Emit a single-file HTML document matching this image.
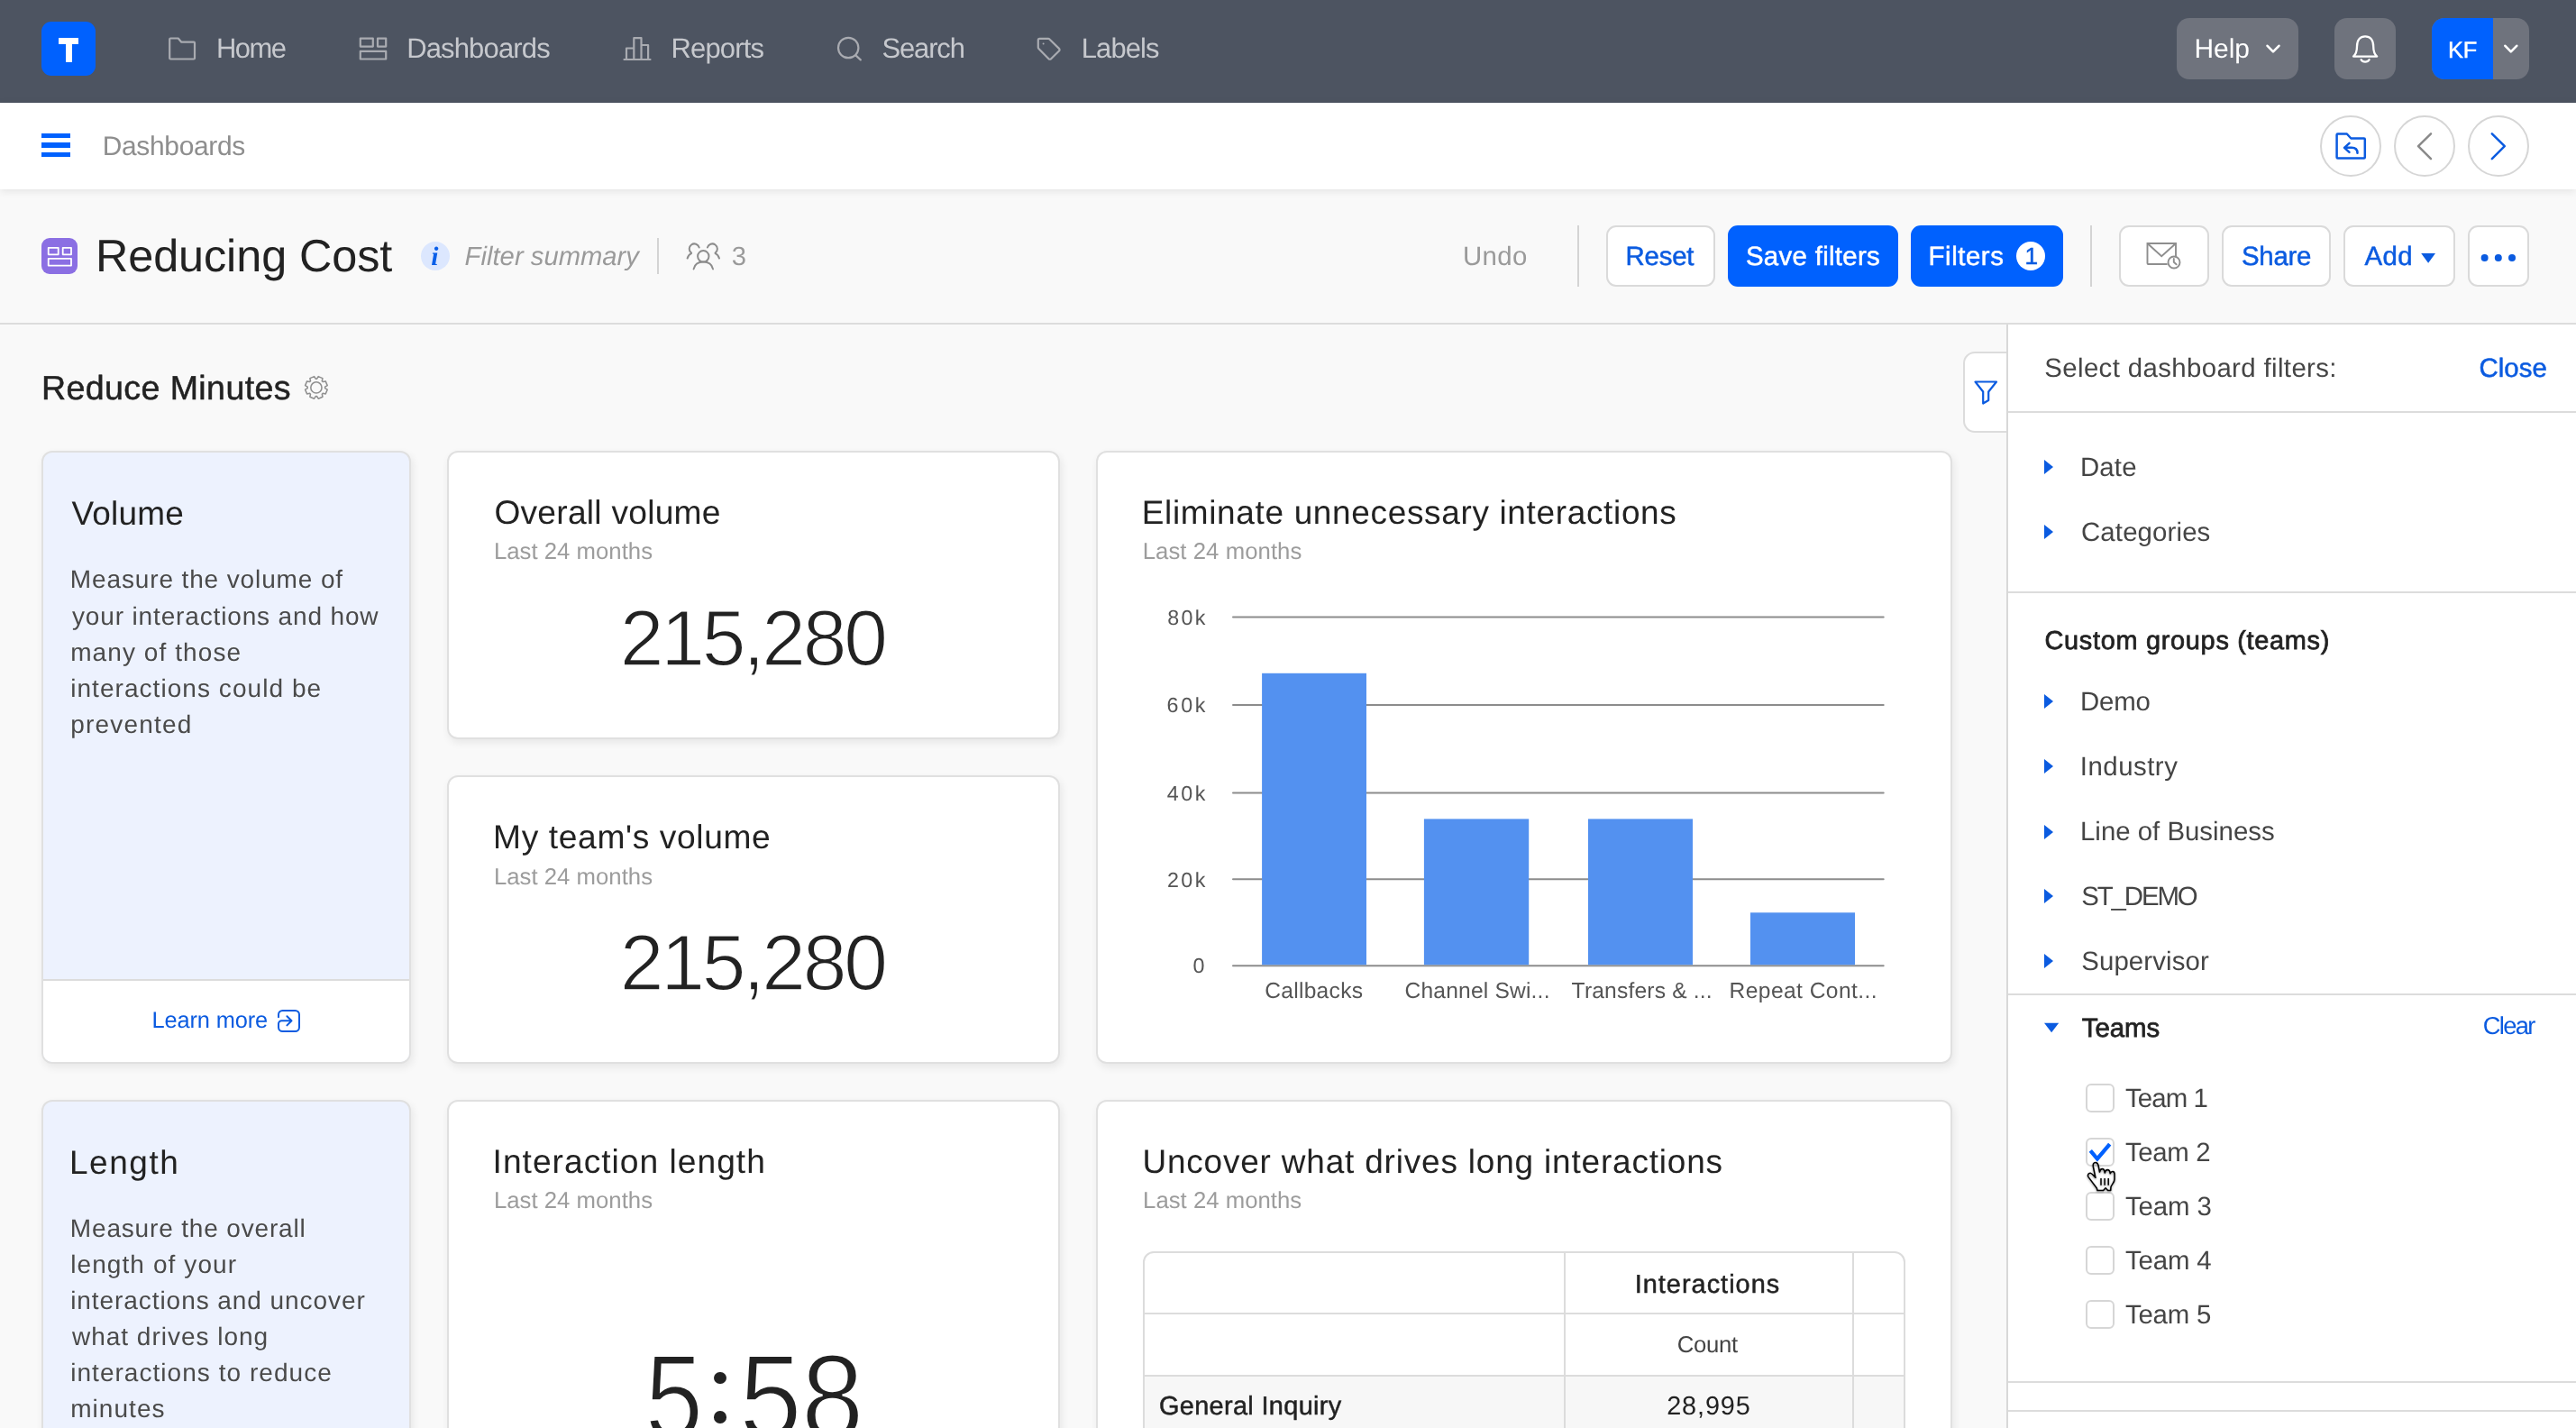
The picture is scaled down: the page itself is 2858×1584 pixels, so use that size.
<!DOCTYPE html>
<html lang="en">
<head>
<meta charset="utf-8">
<title>Reducing Cost</title>
<style>
*{box-sizing:border-box;margin:0;padding:0}
html,body{width:2858px;height:1584px;overflow:hidden;background:#f9f9f9}
body{font-family:"Liberation Sans",sans-serif;color:#222;position:relative;text-rendering:geometricPrecision}
#w{position:absolute;left:0;top:0;width:2858px;height:1584px;will-change:transform}
.a{position:absolute}
.t{position:absolute;white-space:nowrap;line-height:1}
svg{position:absolute;left:0;top:0;overflow:visible;fill:none;stroke-linecap:round;stroke-linejoin:round}
#nav{left:0;top:0;width:2858px;height:114px;background:#4d5461}
#logo{left:46px;top:24px;width:60px;height:60px;border-radius:11px;background:#0061fe}
.nb{background:#6f737d;border-radius:14px;top:20px;height:68px}
#crumb{left:0;top:114px;width:2858px;height:96px;background:#fff;box-shadow:0 2px 9px rgba(0,0,0,.09)}
.circ{width:68px;height:68px;border-radius:50%;border:2px solid #d6d6d6;background:#fff;top:128px}
#tbar{left:0;top:358px;width:2858px;height:2px;background:#dcdcdc}
.btn{top:250px;height:68px;border-radius:11px;border:2px solid #dadada;background:#fff}
.btn.p{background:#0061fe;border-color:#0061fe}
.card{background:#fff;border:2px solid #e0e0e0;border-radius:12px;box-shadow:2px 4px 10px rgba(0,0,0,.075)}
.info{background:#edf2fe}
#panel{left:2226px;top:360px;width:632px;height:1224px;background:#fff;border-left:2px solid #d8d8d8}
.hr{left:2228px;width:630px;height:2px;background:#dcdcdc}
.tri{left:2268px;width:0;height:0;border-left:10px solid #0b5be0;border-top:8px solid transparent;border-bottom:8px solid transparent}
.cb{left:2314px;width:32px;height:32px;border:2px solid #d6d6d6;border-radius:6px;background:#fff}
</style>
</head>
<body>
<div id="w">
<div id="nav" class="a"></div><div id="logo" class="a"></div>
<div class="a" style="left:65px;top:41.5px;width:22px;height:7px;background:#fff"></div><div class="a" style="left:72.5px;top:41.5px;width:7px;height:27px;background:#fff"></div>
<div class="t" style="left:239.9px;top:38px;color:#c6c8cd;font-size:30.98px;letter-spacing:-1.47px;">Home</div>
<div class="t" style="left:451.2px;top:38px;color:#c6c8cd;font-size:30.98px;letter-spacing:-0.84px;">Dashboards</div>
<div class="t" style="left:744.6px;top:38px;color:#c6c8cd;font-size:30.98px;letter-spacing:-0.85px;">Reports</div>
<div class="t" style="left:978.5px;top:38px;color:#c6c8cd;font-size:30.98px;letter-spacing:-1.15px;">Search</div>
<div class="t" style="left:1199.8px;top:38px;color:#c6c8cd;font-size:30.98px;letter-spacing:-0.91px;">Labels</div>
<svg width="2858" height="114" stroke="#a9abb1" stroke-width="2.2">
<path d="M188.2 43.5 a1 1 0 0 1 1-1 h8.5 l3.6 4.2 h13.7 a1 1 0 0 1 1 1 v16.8 a1 1 0 0 1-1 1 h-25.8 a1 1 0 0 1-1-1 z"/>
<rect x="399.8" y="42.6" width="14" height="9"/><rect x="419" y="42.6" width="9.2" height="9"/><rect x="399.8" y="56.8" width="28.4" height="8.7"/>
<path d="M692.5 66 h29 M695 65.5 v-12 h8.3 M703.3 65.5 v-23.3 h8.2 v23.3 M711.5 50 h7.6 v15.5"/>
<circle cx="941.2" cy="53" r="11.2"/><path d="M949.4 61.4 l5.4 5"/>
<path d="M1151.8 44.5 a1.6 1.6 0 0 1 1.6-1.6 h9.6 a2 2 0 0 1 1.4 .6 l10.6 10.4 a1.8 1.8 0 0 1 0 2.6 l-8.9 8.7 a1.8 1.8 0 0 1-2.6 0 l-11.1-11.3 a2 2 0 0 1-.6-1.4 z"/>
<circle cx="1157.6" cy="48.6" r="1" fill="#a9abb1" stroke="none"/>
</svg>
<div class="a nb" style="left:2415px;width:135px"></div>
<div class="t" style="left:2434.6px;top:40px;color:#fff;font-size:29.93px;letter-spacing:-0.10px;">Help</div>
<div class="a nb" style="left:2590px;width:68px"></div>
<div class="a nb" style="left:2698px;width:108px"></div>
<div class="a" style="left:2698px;top:20px;width:68px;height:68px;background:#0061fe;border-radius:14px 0 0 14px"></div>
<div class="t" style="left:2716.1px;top:44px;color:#fff;font-size:25.41px;letter-spacing:-0.20px;-webkit-text-stroke:.4px #fff;">KF</div>
<svg width="2858" height="114" stroke="#fff" stroke-width="2.6">
<path d="M2515.6 50.8 l6.4 6.6 l6.4 -6.6"/>
<path d="M2779.4 50.8 l6.4 6.6 l6.4 -6.6"/>
<path stroke-width="2.3" d="M2611 62.6 c3.2-2.6 4-6.6 4-11 c0-7.2 3.6-11.2 9.1-11.2 c5.500 0 9.100 4 9.100 11.200 c0 4.400 .8 8.400 4 11 z"/>
<path stroke-width="2.3" d="M2619.600 66.200 c.8 1.500 2.300 2.400 4.500 2.400 s3.700 -.9 4.500 -2.400"/>
</svg>
<div id="crumb" class="a"></div>
<div class="a" style="left:45.5px;top:147.5px;width:32.5px;height:5.5px;background:#0061fe"></div>
<div class="a" style="left:45.5px;top:158px;width:32.5px;height:5.5px;background:#0061fe"></div>
<div class="a" style="left:45.5px;top:168.5px;width:32.5px;height:5.5px;background:#0061fe"></div>
<div class="t" style="left:113.7px;top:148px;color:#8e8e8e;font-size:29.93px;letter-spacing:-0.30px;">Dashboards</div>
<div class="a circ" style="left:2574px"></div><div class="a circ" style="left:2656px"></div><div class="a circ" style="left:2738px"></div>
<svg width="2858" height="220" stroke="#0b5be0" stroke-width="2.5">
<path d="M2592.600 149.500 a1 1 0 0 1 1-1 h10.200 l4.600 5 h14.400 a1 1 0 0 1 1 1 v20 a1 1 0 0 1 -1 1 h-29.200 a1 1 0 0 1 -1 -1 z"/>
<path d="M2606.500 158.800 l-5.500 5 l5.500 5 M2601.500 163.800 h7.500 c4.500 0 6.500 2.500 6.500 6"/>
<path stroke="#8a8a8a" d="M2697 148.300 l-14 13.900 l14 13.900"/>
<path d="M2764.800 148.300 l14 13.900 l-14 13.900"/>
</svg>
<div id="tbar" class="a"></div>
<div class="a" style="left:46px;top:264px;width:40px;height:40px;border-radius:9px;background:#8b6fe3"></div>
<svg width="900" height="360" stroke="#fff" stroke-width="1.8" stroke-linejoin="miter">
<rect x="53.700" y="274.800" width="11" height="7.500"/><rect x="69.700" y="274.800" width="9.300" height="7.500"/><rect x="53.700" y="286.800" width="25.300" height="7.800"/></svg>
<div class="t" style="left:105.9px;top:259px;color:#222;font-size:50.4px;letter-spacing:-0.09px;">Reducing Cost</div>
<div class="a" style="left:467px;top:267.800px;width:32px;height:32px;border-radius:50%;background:#dce7fe"></div>
<div class="t" style="left:478.3px;top:271px;color:#0b5fe8;font-size:29.5px;font-weight:bold;font-style:italic;font-family:'Liberation Serif',serif;">i</div>
<div class="t" style="left:515.6px;top:271px;color:#9a9a9a;font-size:29.19px;font-style:italic;letter-spacing:0.03px;">Filter summary</div>
<div class="a" style="left:729px;top:264px;width:2px;height:40px;background:#d4d4d4"></div>
<svg width="900" height="360" stroke="#8c8c8c" stroke-width="2">
<circle cx="780.3" cy="284.3" r="6.2"/><path d="M769.6 298.4 c1.2-5.6 5.4-7.8 10.700-7.8 s9.500 2.200 10.700 7.800"/>
<path d="M767.1 280.600 A5.600 5.600 0 1 1 775.700 274.500 M762.600 286.600 c.8-2.600 2.200-4.400 4.400-5.400"/>
<path d="M793.500 280.600 A5.600 5.600 0 1 0 784.900 274.500 M798 286.600 c-.8-2.600-2.200-4.400-4.400-5.400"/>
</svg>
<div class="t" style="left:811.7px;top:271px;color:#9a9a9a;font-size:29.19px;">3</div>
<div class="t" style="left:1623.0px;top:270px;color:#9a9a9a;font-size:29.4px;letter-spacing:0.37px;">Undo</div>
<div class="a" style="left:1750px;top:250px;width:2px;height:68px;background:#d4d4d4"></div>
<div class="a btn" style="left:1782px;width:121px"></div>
<div class="t" style="left:1803.6px;top:270px;color:#0b5be0;font-size:29.4px;letter-spacing:-0.21px;-webkit-text-stroke:.5px #0b5be0;">Reset</div>
<div class="a btn p" style="left:1917px;width:189px"></div>
<div class="t" style="left:1936.9px;top:270px;color:#fff;font-size:29.4px;letter-spacing:0.32px;-webkit-text-stroke:.5px #fff;">Save filters</div>
<div class="a btn p" style="left:2120px;width:169px"></div>
<div class="t" style="left:2139.6px;top:270px;color:#fff;font-size:29.4px;letter-spacing:0.55px;-webkit-text-stroke:.5px #fff;">Filters</div>
<div class="a" style="left:2237px;top:268px;width:32px;height:32px;border-radius:50%;background:#fff"></div>
<div class="t" style="left:2246.6px;top:271px;color:#0b5be0;font-size:26.25px;-webkit-text-stroke:.5px #0b5be0;">1</div>
<div class="a" style="left:2319px;top:250px;width:2px;height:68px;background:#d4d4d4"></div>
<div class="a btn" style="left:2351px;width:100px"></div>
<svg width="2858" height="360" stroke="#8e8e8e" stroke-width="1.9" style="stroke-linejoin:miter;stroke-linecap:butt">
<path d="M2404.600 293 H2383.400 a.9 .9 0 0 1 -.9 -.9 V270 H2414 V284.400"/><path d="M2382.500 270 L2398.200 284.100 L2414 270"/>
<circle cx="2412" cy="291" r="6.500" fill="#fff"/><path style="stroke-linecap:round;stroke-linejoin:round" d="M2411.800 287 V290.800 L2414.600 293.300"/></svg>
<div class="a btn" style="left:2465px;width:121px"></div>
<div class="t" style="left:2487.0px;top:270px;color:#0b5be0;font-size:29.4px;letter-spacing:-0.27px;-webkit-text-stroke:.5px #0b5be0;">Share</div>
<div class="a btn" style="left:2600px;width:124px"></div>
<div class="t" style="left:2623.5px;top:270px;color:#0b5be0;font-size:29.4px;letter-spacing:0.35px;-webkit-text-stroke:.5px #0b5be0;">Add</div>
<svg width="2858" height="360"><path fill="#0b5be0" d="M2686.200 281 h15.800 l-7.900 10.800 z"/></svg>
<div class="a btn" style="left:2738px;width:68px"></div>
<svg width="2858" height="360" fill="#0b5be0"><circle cx="2756.600" cy="285.900" r="4" fill="#0b5be0"/><circle cx="2771.800" cy="285.900" r="4" fill="#0b5be0"/><circle cx="2787" cy="285.900" r="4" fill="#0b5be0"/></svg>
<div class="t" style="left:45.9px;top:412px;color:#222;font-size:37.59px;letter-spacing:0.40px;-webkit-text-stroke:.5px #222;">Reduce Minutes</div>
<svg width="500" height="500" stroke="#8f8f8f" stroke-width="1.55"><path d="M360.6 430.6 L363.2 432.2 L361.2 436.9 L358.2 436.3 L357.3 437.2 L357.9 440.2 L353.2 442.2 L351.6 439.6 L350.2 439.6 L348.6 442.2 L343.9 440.2 L344.5 437.2 L343.6 436.3 L340.6 436.9 L338.6 432.2 L341.2 430.6 L341.2 429.2 L338.6 427.6 L340.6 422.9 L343.6 423.5 L344.5 422.6 L343.9 419.6 L348.6 417.6 L350.2 420.2 L351.6 420.2 L353.2 417.6 L357.9 419.6 L357.3 422.6 L358.2 423.5 L361.2 422.9 L363.2 427.6 L360.6 429.2Z"/><circle cx="350.9" cy="429.9" r="6.1"/></svg>
<div class="a card info" style="left:46px;top:500px;width:410px;height:680px"></div>
<div class="a" style="left:48px;top:1086px;width:406px;height:92px;background:#fff;border-top:2px solid #dcdcdc;border-radius:0 0 10px 10px"></div>
<div class="a card" style="left:496px;top:500px;width:680px;height:320px"></div>
<div class="a card" style="left:496px;top:860px;width:680px;height:320px"></div>
<div class="a card" style="left:1216px;top:500px;width:950px;height:680px"></div>
<div class="a card info" style="left:46px;top:1220px;width:410px;height:400px"></div>
<div class="a card" style="left:496px;top:1220px;width:680px;height:400px"></div>
<div class="a card" style="left:1216px;top:1220px;width:950px;height:400px"></div>
<div class="t" style="left:79.5px;top:552px;color:#222;font-size:36.96px;letter-spacing:0.22px;">Volume</div>
<div class="t" style="left:77.8px;top:629px;color:#4a4a4a;font-size:28.04px;letter-spacing:0.86px;">Measure the volume of</div>
<div class="t" style="left:80.0px;top:670px;color:#4a4a4a;font-size:28.04px;letter-spacing:0.84px;">your interactions and how</div>
<div class="t" style="left:78.2px;top:710px;color:#4a4a4a;font-size:28.04px;letter-spacing:1.07px;">many of those</div>
<div class="t" style="left:78.2px;top:750px;color:#4a4a4a;font-size:28.04px;letter-spacing:1.04px;">interactions could be</div>
<div class="t" style="left:78.2px;top:790px;color:#4a4a4a;font-size:28.04px;letter-spacing:1.18px;">prevented</div>
<div class="t" style="left:168.6px;top:1120px;color:#0b5be0;font-size:25.41px;letter-spacing:-0.15px;">Learn more</div>
<svg width="500" height="1300" stroke="#0b5be0" stroke-width="2"><path d="M309 1128.300 V1125.500 a4.500 4.500 0 0 1 4.500-4.500 H327.500 a4.500 4.500 0 0 1 4.500 4.500 V1139.500 a4.500 4.500 0 0 1 -4.500 4.500 H313.500 a4.500 4.500 0 0 1 -4.500-4.500 V1135.700 a3.500 3.500 0 0 1 3.500-3.500 H323.300 M318.400 1127.200 l5.100 5 l-5.100 5.200"/></svg>
<div class="t" style="left:548.4px;top:550px;color:#222;font-size:37.17px;letter-spacing:0.25px;">Overall volume</div>
<div class="t" style="left:547.9px;top:600px;color:#9c9c9c;font-size:25.73px;letter-spacing:0.02px;">Last 24 months</div>
<div class="t" style="left:687.8px;top:665px;color:#222;font-size:87.67px;letter-spacing:-3.29px;-webkit-text-stroke:1.6px #fff;">215,280</div>
<div class="t" style="left:547.1px;top:910px;color:#222;font-size:37.17px;letter-spacing:0.63px;">My team&#x27;s volume</div>
<div class="t" style="left:547.9px;top:961px;color:#9c9c9c;font-size:25.73px;letter-spacing:0.02px;">Last 24 months</div>
<div class="t" style="left:687.8px;top:1025px;color:#222;font-size:87.67px;letter-spacing:-3.29px;-webkit-text-stroke:1.6px #fff;">215,280</div>
<div class="t" style="left:77.0px;top:1272px;color:#222;font-size:36.96px;letter-spacing:1.57px;">Length</div>
<div class="t" style="left:77.8px;top:1349px;color:#4a4a4a;font-size:28.04px;letter-spacing:0.82px;">Measure the overall</div>
<div class="t" style="left:78.2px;top:1389px;color:#4a4a4a;font-size:28.04px;letter-spacing:1.08px;">length of your</div>
<div class="t" style="left:78.2px;top:1429px;color:#4a4a4a;font-size:28.04px;letter-spacing:0.92px;">interactions and uncover</div>
<div class="t" style="left:80.0px;top:1469px;color:#4a4a4a;font-size:28.04px;letter-spacing:0.97px;">what drives long</div>
<div class="t" style="left:78.2px;top:1509px;color:#4a4a4a;font-size:28.04px;letter-spacing:1.03px;">interactions to reduce</div>
<div class="t" style="left:78.2px;top:1549px;color:#4a4a4a;font-size:28.04px;letter-spacing:1.03px;">minutes</div>
<div class="t" style="left:546.6px;top:1270px;color:#222;font-size:37.17px;letter-spacing:1.01px;">Interaction length</div>
<div class="t" style="left:547.9px;top:1320px;color:#9c9c9c;font-size:25.73px;letter-spacing:0.02px;">Last 24 months</div>
<div class="t" style="left:715.2px;top:1484px;color:#222;font-size:134.19px;transform-origin:5.2px 0;transform:scaleX(0.8612);-webkit-text-stroke:2.4px #fff;">5</div>
<div class="t" style="left:819.6px;top:1484px;color:#222;font-size:134.19px;letter-spacing:-0.94px;transform-origin:5.2px 0;transform:scaleX(0.9300);-webkit-text-stroke:2.4px #fff;">58</div>
<div class="a" style="left:792.4px;top:1521.5px;width:13.6px;height:13.6px;border-radius:50%;background:#222"></div><div class="a" style="left:792.4px;top:1565.2px;width:13.6px;height:13.6px;border-radius:50%;background:#222"></div>
<div class="t" style="left:1266.7px;top:551px;color:#222;font-size:36.96px;letter-spacing:0.67px;">Eliminate unnecessary interactions</div>
<div class="t" style="left:1267.7px;top:600px;color:#9c9c9c;font-size:25.73px;letter-spacing:0.06px;">Last 24 months</div>
<svg width="2858" height="1584" stroke-linecap="butt"><path stroke="#8c8c8c" stroke-width="2" d="M1368 684.6 H2089.700"/><path stroke="#8c8c8c" stroke-width="2" d="M1368 782 H2089.700"/><path stroke="#8c8c8c" stroke-width="2" d="M1368 879.5 H2089.700"/><path stroke="#8c8c8c" stroke-width="2" d="M1368 975.3 H2089.700"/><path stroke="#8c8c8c" stroke-width="2" d="M1368 1071.2 H2089.700"/><rect x="1400.1" y="746.8" width="115.9" height="323.4" fill="#5391f0"/><rect x="1579.9" y="908.4" width="116.3" height="161.8" fill="#5391f0"/><rect x="1762" y="908.4" width="116.0" height="161.8" fill="#5391f0"/><rect x="1942" y="1012.3" width="116.0" height="57.9" fill="#5391f0"/></svg>
<div class="t" style="left:1295.3px;top:674px;color:#555;font-size:23.31px;letter-spacing:2.25px;">80k</div>
<div class="t" style="left:1294.5px;top:771px;color:#555;font-size:23.31px;letter-spacing:2.67px;">60k</div>
<div class="t" style="left:1294.8px;top:869px;color:#555;font-size:23.31px;letter-spacing:2.50px;">40k</div>
<div class="t" style="left:1295.0px;top:965px;color:#555;font-size:23.31px;letter-spacing:2.38px;">20k</div>
<div class="t" style="left:1323.5px;top:1060px;color:#555;font-size:23.31px;">0</div>
<div class="t" style="left:1403.2px;top:1088px;color:#555;font-size:24.57px;letter-spacing:0.29px;">Callbacks</div>
<div class="t" style="left:1558.5px;top:1088px;color:#555;font-size:24.57px;letter-spacing:0.20px;">Channel Swi...</div>
<div class="t" style="left:1743.6px;top:1088px;color:#555;font-size:24.57px;letter-spacing:0.19px;">Transfers &amp; ...</div>
<div class="t" style="left:1918.6px;top:1088px;color:#555;font-size:24.57px;letter-spacing:0.43px;">Repeat Cont...</div>
<div class="t" style="left:1267.4px;top:1271px;color:#222;font-size:36.96px;letter-spacing:0.82px;">Uncover what drives long interactions</div>
<div class="t" style="left:1268.1px;top:1320px;color:#9c9c9c;font-size:25.73px;letter-spacing:0.02px;">Last 24 months</div>
<div class="a" style="left:1268px;top:1387.5px;width:846px;height:260px;border:2px solid #dcdcdc;border-radius:12px;background:#fff;overflow:hidden"><div class="a" style="left:0;top:135px;width:846px;height:130px;background:#f7f7f7"></div><div class="a" style="left:0;top:66px;width:846px;height:2px;background:#dcdcdc"></div><div class="a" style="left:0;top:135px;width:846px;height:2px;background:#dcdcdc"></div><div class="a" style="left:465px;top:0;width:2px;height:260px;background:#dcdcdc"></div><div class="a" style="left:784.500px;top:0;width:2px;height:260px;background:#dcdcdc"></div></div>
<div class="t" style="left:1813.7px;top:1411px;color:#222;font-size:28.88px;letter-spacing:1.02px;-webkit-text-stroke:.5px #222;">Interactions</div>
<div class="t" style="left:1860.8px;top:1480px;color:#454545;font-size:25.73px;letter-spacing:-0.34px;">Count</div>
<div class="t" style="left:1286.0px;top:1546px;color:#222;font-size:28.88px;letter-spacing:0.34px;-webkit-text-stroke:.5px #222;">General Inquiry</div>
<div class="t" style="left:1849.2px;top:1546px;color:#222;font-size:28.88px;letter-spacing:0.87px;">28,995</div>
<div class="a" style="left:2178px;top:390px;width:52px;height:90px;background:#fff;border:2px solid #dcdcdc;border-radius:13px 0 0 13px"></div>
<div id="panel" class="a"></div>
<svg width="2858" height="600" stroke="#0b5be0" stroke-width="2.200"><path d="M2191.500 423.500 h23.500 l-8.800 11 v9.500 l-6 3.500 v-13 z"/></svg>
<div class="t" style="left:2268.3px;top:394px;color:#454545;font-size:29.4px;letter-spacing:0.37px;">Select dashboard filters:</div>
<div class="t" style="left:2750.4px;top:394px;color:#0b5be0;font-size:29.4px;letter-spacing:0.08px;-webkit-text-stroke:.5px #0b5be0;">Close</div>
<div class="a hr" style="top:456px"></div><div class="a hr" style="top:656px"></div><div class="a hr" style="top:1102px"></div><div class="a hr" style="top:1532px"></div><div class="a hr" style="top:1564px"></div>
<div class="t" style="left:2308.0px;top:504px;color:#454545;font-size:29.4px;letter-spacing:0.13px;">Date</div>
<div class="a tri" style="top:510.1px"></div>
<div class="t" style="left:2309.0px;top:576px;color:#454545;font-size:29.4px;letter-spacing:0.13px;">Categories</div>
<div class="a tri" style="top:582.2px"></div>
<div class="t" style="left:2308.0px;top:764px;color:#454545;font-size:29.4px;letter-spacing:-0.15px;">Demo</div>
<div class="a tri" style="top:770.0px"></div>
<div class="t" style="left:2307.8px;top:836px;color:#454545;font-size:29.4px;letter-spacing:0.50px;">Industry</div>
<div class="a tri" style="top:842.4px"></div>
<div class="t" style="left:2308.0px;top:908px;color:#454545;font-size:29.4px;">Line of Business</div>
<div class="a tri" style="top:914.6px"></div>
<div class="t" style="left:2309.2px;top:980px;color:#454545;font-size:29.4px;letter-spacing:-2.10px;">ST_DEMO</div>
<div class="a tri" style="top:986.4px"></div>
<div class="t" style="left:2309.2px;top:1052px;color:#454545;font-size:29.4px;letter-spacing:0.12px;">Supervisor</div>
<div class="a tri" style="top:1058.2px"></div>
<div class="t" style="left:2268.5px;top:697px;color:#222;font-size:28.88px;letter-spacing:0.71px;-webkit-text-stroke:.75px #222;">Custom groups (teams)</div>
<div class="t" style="left:2309.8px;top:1126px;color:#222;font-size:29.4px;letter-spacing:-0.02px;-webkit-text-stroke:.75px #222;">Teams</div>
<svg width="2858" height="1584"><path fill="#0b5be0" d="M2268 1134.800 h16.200 l-8.100 10.400 z"/></svg>
<div class="t" style="left:2754.8px;top:1124px;color:#0b5be0;font-size:27.3px;letter-spacing:-1.66px;">Clear</div>
<div class="a cb" style="top:1202.0px"></div>
<div class="t" style="left:2357.9px;top:1204px;color:#454545;font-size:29.4px;letter-spacing:-0.87px;">Team 1</div>
<div class="a cb" style="top:1262.1px"></div>
<div class="t" style="left:2357.9px;top:1264px;color:#454545;font-size:29.4px;letter-spacing:-0.31px;">Team 2</div>
<div class="a cb" style="top:1322.2px"></div>
<div class="t" style="left:2357.9px;top:1324px;color:#454545;font-size:29.4px;letter-spacing:-0.08px;">Team 3</div>
<div class="a cb" style="top:1382.3px"></div>
<div class="t" style="left:2357.9px;top:1384px;color:#454545;font-size:29.4px;letter-spacing:-0.13px;">Team 4</div>
<div class="a cb" style="top:1442.4px"></div>
<div class="t" style="left:2357.9px;top:1444px;color:#454545;font-size:29.4px;letter-spacing:-0.20px;">Team 5</div>
<svg width="2858" height="1584" stroke="#0061fe" stroke-width="4.3" stroke-linecap="butt" stroke-linejoin="miter"><path style="stroke-linecap:butt;stroke-linejoin:miter" d="M2319.3 1276.3 l7.6 9.2 l13.8 -16.4"/></svg>
<svg width="2858" height="1584" stroke="#000" stroke-width="1.55" fill="#fff" style="filter:drop-shadow(0 1.5px 1.2px rgba(0,0,0,.45))"><path d="M2324.9 1306.3 L2322.3 1294 C2321.8 1291 2323 1289.4 2324.8 1289.4 C2326.6 1289.4 2327.6 1290.6 2328 1292.6 L2329.5 1300 C2330 1297.5 2331 1296.6 2332.3 1296.6 C2334 1296.6 2335 1298.5 2335.2 1301 C2335.8 1298.5 2336.8 1297.6 2338.1 1297.6 C2339.8 1297.6 2341 1299.5 2341.2 1301.8 C2341.8 1300.2 2342.8 1299.5 2344 1299.6 C2345.4 1299.8 2346 1301 2346 1302.5 L2346 1308 C2346 1311.5 2343.5 1313 2342 1316.5 L2341.7 1320.5 L2338.6 1320.5 L2336.1 1317.8 L2333.6 1320.5 L2327 1320.5 L2326.3 1318 L2317 1305.6 C2315.6 1303.6 2317 1301.2 2319.2 1301.3 C2320.6 1301.4 2322.5 1303.5 2324.9 1306.3 Z"/><path fill="none" stroke-width="1.5" style="stroke-linecap:butt" d="M2331 1307.1 V1314.7 M2335.1 1307.1 V1314.7 M2339.2 1307.1 V1314.7"/></svg>
</div>
</body>
</html>
